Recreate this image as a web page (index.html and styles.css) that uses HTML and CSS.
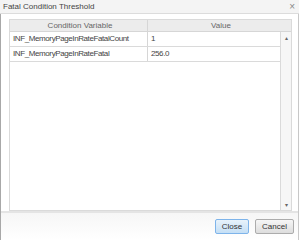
FILE: index.html
```html
<html lang="en">
<head>
    <meta charset="UTF-8">
    <title>Fatal Condition Threshold</title>
    <link rel="stylesheet" href="styles.css">
</head>
<body>
    <div class="dialog">
        <div class="titlebar">
            <span class="title">Fatal Condition Threshold</span>
            <span class="close-x">&#215;</span>
        </div>
        <div class="window">
            <div class="content">
                <div class="grid">
                    <div class="grid-head">
                        <div class="col-name">Condition Variable</div>
                        <div class="col-value">Value</div>
                    </div>
                    <div class="grid-body">
                        <div class="rows">
                            <div class="row">
                                <div class="col-name">INF_MemoryPageInRateFatalCount</div>
                                <div class="col-value">1</div>
                            </div>
                            <div class="row">
                                <div class="col-name">INF_MemoryPageInRateFatal</div>
                                <div class="col-value">256.0</div>
                            </div>
                        </div>
                        <div class="scrollbar">
                            <span class="arrow">&#9652;</span>
                            <span class="arrow">&#9662;</span>
                        </div>
                    </div>
                </div>
            </div>
            <div class="footer">
                <button class="btn btn-primary">Close</button>
                <button class="btn">Cancel</button>
            </div>
        </div>
    </div>
</body>
</html>
```

FILE: styles.css
```css
body {
    margin: 0;
    background: #ffffff;
    font-family: "Liberation Sans", Arial, sans-serif;
}

.dialog {
    width: 299px;
    height: 240px;
    display: flex;
    flex-direction: column;
}

.titlebar {
    height: 15px;
    background: #f4f4f4;
    border-bottom: 1px solid #dcdcdc;
    display: flex;
    align-items: center;
    justify-content: space-between;
    padding: 0 4px 0 3px;
    font-size: 8px;
    color: #444;
}

.close-x {
    font-size: 10px;
    color: #888;
}

.window {
    flex: 1;
    display: flex;
    flex-direction: column;
    border-left: 1px solid #a8a8a8;
    border-right: 1px solid #c8c8c8;
}

.content {
    flex: 1;
    padding: 5px 6px 0 8px;
}

.grid {
    border: 1px solid #dadada;
    height: 190px;
    display: flex;
    flex-direction: column;
    font-size: 8px;
    color: #444;
}

.grid-head {
    display: flex;
    height: 11px;
    background: #ececec;
    border-bottom: 1px solid #d6d6d6;
    color: #666;
}

.grid-head div {
    text-align: center;
    line-height: 11px;
}

.col-name {
    width: 134px;
    border-right: 1px solid #d6d6d6;
    padding-left: 3px;
}

.col-value {
    flex: 1;
    padding-left: 3px;
}

.grid-body {
    flex: 1;
    display: flex;
}

.rows {
    flex: 1;
}

.row {
    display: flex;
    height: 14px;
    line-height: 14px;
    border-bottom: 1px solid #dadada;
    letter-spacing: -0.4px;
}

.scrollbar {
    width: 10px;
    border-left: 1px solid #dadada;
    background: #f6f6f6;
    display: flex;
    flex-direction: column;
    justify-content: space-between;
    align-items: center;
    font-size: 6px;
    color: #666;
    padding: 2px 0;
}

.footer {
    height: 27px;
    border-top: 2px solid #e4e4e4;
    background: linear-gradient(#f6f6f6, #ffffff);
    display: flex;
    justify-content: flex-end;
    align-items: center;
    gap: 6px;
    padding-right: 4px;
}

.btn {
    height: 15px;
    padding: 0 6px;
    font-family: "Liberation Sans", Arial, sans-serif;
    font-size: 8px;
    color: #333;
    border: 1px solid #acacac;
    border-radius: 2px;
    background: linear-gradient(#f6f6f6, #dddddd);
}

.btn-primary {
    border-color: #7eb4ea;
    background: linear-gradient(#e8f2fb, #c4dff5);
}
```
